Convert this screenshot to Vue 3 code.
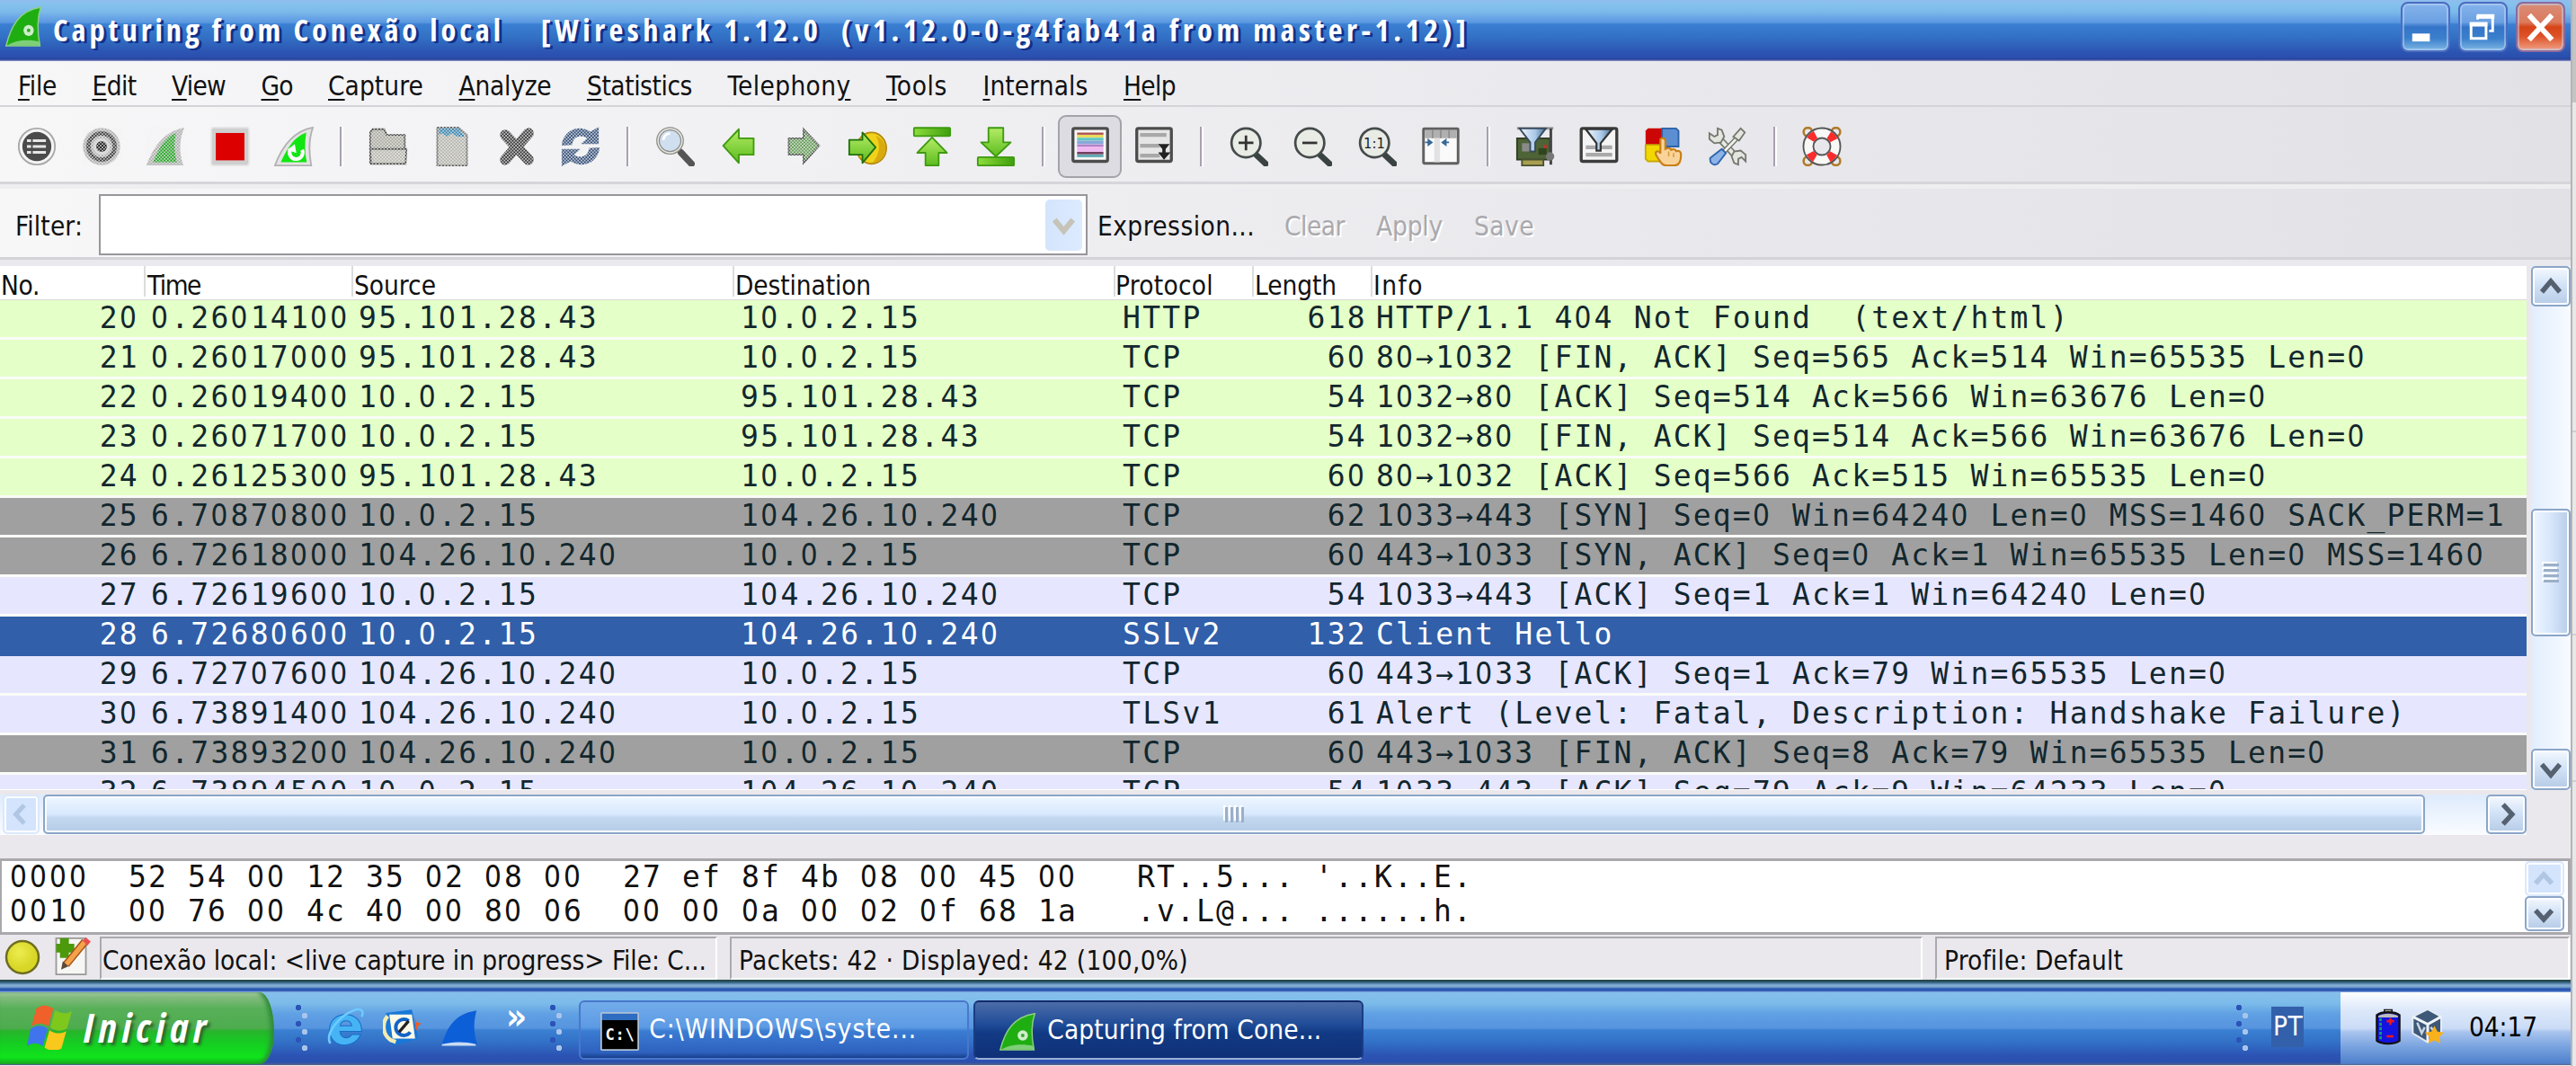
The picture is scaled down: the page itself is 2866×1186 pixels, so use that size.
<script setup>
import { h } from 'vue'

// Spreads letter-spacing so that a label fills the given width.
const vFit = {
  mounted(el, { value }) {
    const count = el.textContent.length
    el.style.letterSpacing = (value - el.getBoundingClientRect().width) / count + 'px'
  },
}

// Monospaced text with plain (undotted) zeros.
const Mono = ({ text }) =>
  h('span', { class: 'mono' }, text.split(/(0+)/).filter(Boolean).map((run) => (run[0] === '0' ? h('span', { class: 'zero' }, run) : run)))
Mono.props = ['text']

const menu = [
  ['', 'F', 'ile', 43], ['', 'E', 'dit', 49], ['', 'V', 'iew', 60], ['', 'G', 'o', 35], ['', 'C', 'apture', 106],
  ['', 'A', 'nalyze', 103], ['', 'S', 'tatistics', 117], ['Telephon', 'y', '', 137], ['', 'T', 'ools', 68], ['', 'I', 'nternals', 117], ['', 'H', 'elp', 58],
]

const fin = '<path d="M2 22C5 13 10 4 22 1c-3 7-3 13-1 21z"'
const lens = (inner) => `<path d="M15 15.5l7.5 7" stroke="#3a4242" stroke-width="3.6" stroke-linecap="round"/><circle cx="10.5" cy="9.8" r="8.8" fill="#e9ebe5" stroke="#444b4a" stroke-width="1.5"/>${inner}`
const dither = '<rect x="-1" y="-1" width="26" height="26" fill="url(#dither)"/>'

const icons = {
  interfaces: '<circle cx="12" cy="12" r="11" fill="#f5f5f5" stroke="#a8a8a8"/><circle cx="12" cy="12" r="8.8" fill="#4b4b4b"/><path d="M6 8.5h2.5M6 12h2.5M6 15.5h2.5M9.5 8.5h8M9.5 12h8M9.5 15.5h8" stroke="#e6e6e6" stroke-width="1.6"/>',
  options: '<circle cx="12" cy="12" r="11.3" fill="#aaa"/><circle cx="12" cy="12" r="8" fill="none" stroke="#333" stroke-width="2.6"/><circle cx="12" cy="12" r="5" fill="#ccc"/><circle cx="12" cy="12" r="3.3" fill="#111"/>' + dither,
  start: '<path d="M.5 23.500C4 14 10 3 23.500.5c-3 7-3.500 15-.5 23z" fill="#aaa"/><path d="M4.500 21.500C8 13 12 6 18.500 4c-1.500 6-1 12 .5 17.500z" fill="#1c9c1c"/>' + dither,
  stop: '<rect x=".5" y=".5" width="23" height="23" rx="1.500" fill="#cfcfcf" stroke="#e6e6e6"/><rect x="3.300" y="3.800" width="17.400" height="16.600" fill="#dc0000"/>',
  restart: '<path d="M.5 23.500C4 14 10 3 23.500.5c-2.500 7-2.500 15-1 23z" fill="#e4e4e4" stroke="#b2b2b2"/><path d="M4 21.500C8 13 12 6 19.500 3.500c-1 6-1 12 .3 18z" fill="#12e612"/><path d="M10 13.500a4 4 0 1 0 7 .5" fill="none" stroke="#fff" stroke-width="2.200"/><path d="M12.500 10.500l1 5.500-5.500-2z" fill="#fff"/>',
  open: '<path d="M1 22V3.500l1.500-2h7L11 5h11v17z" fill="#a5a59a" stroke="#333" /><path d="M1 13.500h22l-.5 9H1.500z" fill="#b5b5aa" stroke="#333"/>' + dither,
  file: '<path d="M3 .5h13l5 4.500v18.500H3z" fill="#b0b0a6" stroke="#555"/><path d="M4 1h12l4 5h-5l-3-2-3 2-3-2-2 1z" fill="#2a7ca8"/>' + dither,
  close: '<path d="M5 5l14 15M19 4L5 20" stroke="#333" stroke-width="6.500" stroke-linecap="round"/>' + dither,
  reload: '<path d="M.5 11.500C1 3 10-2 18 3l5-3v10.500H12l4-3.500c-5-3-9 0-9 4z" fill="#2e4a74"/><path d="M23.500 12.500C23 21 14 26 6 21l-5.500 3V13.500H12L8 17c5 3 9 0 9-4z" fill="#2e4a74"/>' + dither,
  find: '<path d="M15.500 15.500l6.500 7" stroke="#555" stroke-width="4" stroke-linecap="round"/><circle cx="9" cy="8.500" r="7.300" fill="#cfdff0" stroke="#8d8d88" stroke-width="2.200"/><circle cx="9" cy="8.500" r="7.300" fill="none" stroke="#e8e8e4" stroke-width=".8"/><path d="M5 8a4 4 0 0 1 4-4" stroke="#fff" stroke-width="1.500" fill="none"/>',
  back: '<path d="M2.500 11.500L12 1.500V7h9v10h-9v5z" fill="url(#green)" stroke="#3f9a10" stroke-linejoin="round"/>',
  forward: '<path d="M21.500 11.500L12 1.500V7H3v10h9v5z" fill="#5f9850" stroke="#333"/>' + dither,
  goto: '<ellipse cx="14.500" cy="13" rx="9" ry="9.500" fill="#f0d21a" stroke="#b58a10"/><path d="M17 5.500c3 4 3 11-2 16.500 10-1 11-13 2-16.500z" fill="#d8aa10"/><path d="M17 12.500L9 3.500V8H1v9h8v5z" fill="url(#green)" stroke="#20700c" stroke-linejoin="round"/>',
  first: '<rect x="1" y=".7" width="22" height="5" rx=".5" fill="url(#bar)" stroke="#3f9a10"/><path d="M12 6.500l9 9.300h-5V23.500H8v-7.700H3z" fill="url(#green)" stroke="#3f9a10" stroke-linejoin="round"/>',
  last: '<rect x="1" y="18.500" width="22" height="5" rx=".5" fill="url(#bar)" stroke="#3f9a10"/><path d="M12 18L3 9.500h4.500V.7h9v8.800H21z" fill="url(#green)" stroke="#3f9a10" stroke-linejoin="round"/>',
  colorize: '<rect x="1.500" y="1" width="21" height="20" rx="1" fill="#f8f8f8" stroke="#4c4c4c" stroke-width="1.800"/><path d="M4 4.200h16" stroke="#b05050" stroke-width="1.300"/><path d="M4 5.700h16" stroke="#e8d850" stroke-width="1.500"/><path d="M4 7.500h16" stroke="#60c8c0" stroke-width="1.700"/><path d="M4 9.500h16" stroke="#88a8d8" stroke-width="2.200"/><path d="M4 11.500h16" stroke="#b080c8" stroke-width="1.500"/><path d="M4 13.700h16" stroke="#f0b8f0" stroke-width="3"/><path d="M4 16h16" stroke="#704060" stroke-width="1.500"/><path d="M4 17.700h16" stroke="#58a8b0" stroke-width="1.500"/>',
  autoscroll: '<rect x="1.500" y="1" width="21" height="20" rx="1" fill="#e6e6e6" stroke="#4c4c4c" stroke-width="1.800"/><path d="M3.500 5h16M3.500 11.500h12M3.500 17.500h12" stroke="#a8a8a8" stroke-width="2.400"/><path d="M14.500 10.500h7l-2.500 3v2h3L18 20l-3.500-4.500h2.500v-2z" fill="#222"/>',
  zoomIn: lens('<path d="M6 9.800h9M10.500 5.300v9" stroke="#333" stroke-width="1.500"/>'),
  zoomOut: lens('<path d="M6 9.800h9" stroke="#333" stroke-width="1.500"/>'),
  zoomOne: lens('<text x="10.400" y="13" font-size="9" text-anchor="middle" font-family="DejaVu Sans Condensed, sans-serif" fill="#222">1:1</text>'),
  resize: '<rect x="1.500" y="1.200" width="21" height="21" rx=".5" fill="#fafafa" stroke="#606060" stroke-width="1.600"/><path d="M2.300 2h19.400v5H2.300z" fill="#b0b0b0"/><path d="M7 2v5M12 2v5M17 2v5" stroke="#888" stroke-width=".8"/><path d="M8 7h3.500v14.500H8z" fill="#e2e2e4"/><path d="M2.500 9.500h4M4.500 8l2 1.500-2 1.500zM17 9.500h-4M15 8l-2 1.500 2 1.500z" stroke="#356898" fill="#356898"/>',
  captureFilter: '<path d="M1 7h20v13H1z" fill="#4e6336" stroke="#2e3c22"/><path d="M4 20h13v3.500H4z" fill="#a8a050" stroke="#4a5030" /><path d="M1 1h22" stroke="#999" stroke-width="1.600"/><path d="M21.500 1v22" stroke="#444" stroke-width="1.600"/><circle cx="21" cy="18" r="2.600" fill="#777"/><path d="M4 10h6v5H4z" fill="#8a8a8a"/><path d="M14 13h5v4h-5z" fill="#314420"/><path d="M17 11h2v2h-2z" fill="#b33"/><path d="M2.500 1h16L12 9.500v5.500h-3V9.500z" fill="url(#funnel)" stroke="#394a5c"/>',
  displayFilter: '<rect x="1.200" y="1" width="21.600" height="20" rx="1" fill="#f4f4f4" stroke="#3c3c3c" stroke-width="1.800"/><path d="M4 12.500h16M4 17h16" stroke="#aaa" stroke-width="2.400"/><path d="M4 1.500h16l-7 8.500v4.500h-2.500V10z" fill="url(#funnel)" stroke="#333" stroke-width="1.200"/>',
  colors: '<path d="M1 11V2.500L2.500 1H11v10z" fill="#cc0505"/><path d="M11 1h8.500L21 2.500V12H11z" fill="#5b8fd2" stroke="#2d62a8"/><path d="M1 11h10v10H2.500L1 19.500z" fill="#f0d800" stroke="#c8aa00"/><path d="M10 7.500c1.500-1.500 3 0 3 1v5c2-1 3-.5 3.500.5 1.500-.8 2.700 0 3 .8 1.700-.5 3 .2 3 2.200 0 3-.5 6.500-4 6.500h-5c-3 0-3.500-2.500-5-4.500-1.500-2-2-3-1-3.800 1-.7 2 0 2.500 1z" fill="#f9d49a" stroke="#c98018" stroke-width="1.200"/><path d="M15 15v3M18 16v2.500" stroke="#d89838" stroke-width=".8"/>',
  tools: '<path d="M5 5l14 15" stroke="#74786f" stroke-width="4"/><path d="M5 5l14 15" stroke="#e9eae4" stroke-width="2.200"/><path d="M1 4v3.500L4 10l4-.5L10 6 8.500 2 6 1v4L4 6z" fill="#e4e5de" stroke="#74786f"/><path d="M23 21v-4l-3-2.500-4 .5-1.500 3 1.500 4 2.500 1v-3.500l2-1z" fill="#e4e5de" stroke="#74786f"/><path d="M19 5.500L10 15" stroke="#74786f" stroke-width="3"/><path d="M19 5.500L10 15" stroke="#f2f2ec" stroke-width="1.400"/><path d="M15.500 6L20 1l2.500 2.500-3.500 5z" fill="#e4e5de" stroke="#74786f"/><path d="M8.500 13.500l2.500 2.500-5 6.500c-2.500 1.500-5-.5-4.500-3.500z" fill="#8db4e8" stroke="#2f64ac"/>',
  help: '<g fill="none" stroke="#b07a28" stroke-width="1.400"><circle cx="3.500" cy="3.200" r="2.600"/><circle cx="20.500" cy="3.200" r="2.600"/><circle cx="3.500" cy="20.800" r="2.600"/><circle cx="20.500" cy="20.800" r="2.600"/></g><circle cx="12" cy="12" r="8.200" fill="none" stroke="#555" stroke-width="7"/><circle cx="12" cy="12" r="8.200" fill="none" stroke="#f8f8f6" stroke-width="5"/><circle cx="12" cy="12" r="8.200" fill="none" stroke="#fb2c2c" stroke-width="5" stroke-dasharray="4.400 8.480" stroke-dashoffset="-4.240"/>',
  finGreen: '<path d="M1 23.500C4 12 9 3 22.500 1c-2.500 7-2 15-.5 22.500z" fill="#1fae12" stroke="#8fcf86" stroke-width=".8"/><path d="M1.500 23.300c6-3.600 14-3.600 20.300-2.300l.4 2.300z" fill="#7fcf78"/><circle cx="15" cy="14.500" r="3.200" fill="#cfeecb"/><circle cx="15" cy="14.500" r="1.100" fill="#36a82c"/>',
  finBlue: '<path d="M1.500 22.500C5 11 10 3.500 23 1.500c-2 7-2 14 .5 21z" fill="#0d5fd8"/><path d="M1.500 22.500c6-1.500 14-2 21 0v1h-21z" fill="#c9dcf4"/>',
  flag: '<path d="M5 2c3.500-2.500 6-2 9 0l-2.600 9.500c-3-2-5.500-2-9 0z" fill="#f0602a"/><path d="M15 2.800c3 2 6 2.200 9 .5l-2.600 9.300c-3 1.700-6 1.500-9-.5z" fill="#7ec81e"/><path d="M2 12.700c3.500-2 6-2 9 0L8.500 22c-3-2-5.500-2-8.500 0z" fill="#3f74ee"/><path d="M12 13.500c3 2 6 2.200 9 .5l-2.600 9.300c-3 1.700-6 1.500-9-.5z" fill="#f8c81c"/>',
  ie: '<path d="M21.500 16.500c-2 4-5.500 6.500-10 6.500C5.500 23 2 18.800 2 13.500S6 4 12 4s10 4 10 10.500H8.500c.3 2.800 2 4 4 4 1.500 0 2.500-.7 3.300-2zM8.600 11h7.200c-.3-2-1.700-3-3.500-3-2 0-3.300 1-3.700 3z" fill="#46b4f4" fill-rule="evenodd" stroke="#1a6cc8" stroke-width=".6"/><path d="M2.500 22C-1 16 8 5 17 1.500c5-2 6.500.5 5 4" fill="none" stroke="#6ecbff" stroke-width="1.400"/>',
  outlook: '<path d="M2 3l16-2 4 18-14 4-6-3z" fill="#1878d8"/><path d="M4 4h14l2 15H6z" fill="#fdfbe8"/><path d="M16 8a5 5 0 1 0 1 7" fill="none" stroke="#1464c8" stroke-width="2.200"/><path d="M3 5a10 10 0 0 0 2 15l3 1" fill="none" stroke="#f6ebb0" stroke-width="2.400"/><path d="M10 15l6-7" stroke="#222" stroke-width="1.800"/><path d="M20 6l1 3 3 .500-2.500 2 .500 3-2-2z" fill="#f05a20"/>',
  console: '<rect y="0" width="24" height="24" rx="1" fill="#aebfd4"/><rect x="1" y="1" width="22" height="4" fill="#2d6cc0"/><rect x="1" y="5" width="22" height="18" fill="#000"/><text x="12" y="17.500" text-anchor="middle" font-size="9.500" font-weight="bold" textLength="18" font-family="DejaVu Sans Mono, monospace" fill="#fff">C:\\</text>',
  battery: '<path d="M7 3V1.500h5V3" fill="#ddd" stroke="#222"/><path d="M2 5c3-2.500 12-2.500 15 0v17c-3 2.500-12 2.500-15 0z" fill="#1414e0" stroke="#111" stroke-width="1.400"/><path d="M3 5.500c3-2 10-2 13 0v1H3z" fill="#bbb"/><path d="M4.500 7v14" stroke="#10a070" stroke-width="1.600" stroke-dasharray="2 1"/><path d="M8.500 9h5M11 7v4.500M8.500 19h4.500" stroke="#f01818" stroke-width="1.500"/>',
  vbox: '<path d="M2 6L12 1l9 5v11l-9 6-10-6z" fill="#3e5878" stroke="#e4eaf2" stroke-width="1.200"/><path d="M2 6l10 5 9-5M12 11v12" stroke="#f0f4f8" stroke-width="1.800" fill="none"/><path d="M5 10l3 7 2-4M14 13l4 5" stroke="#c8d4e4" stroke-width="1.500" fill="none"/><path d="M16.500 12l2 4 4.500.5-3.300 3 .8 4.300-4-2-4 2 .8-4.300-3.300-3 4.500-.5z" fill="#f8b01c"/>',
  note: '<path d="M3 1h18v22H3z" fill="#f6f6f4" stroke="#999" /><path d="M8 1v12M3 7h11" stroke="#4c9a0c" stroke-width="5.400"/><path d="M20.500 3L9 17" stroke="#a35414" stroke-width="4.600"/><path d="M20.500 3L9 17" stroke="#f6a24c" stroke-width="3"/><path d="M7 15l3.500 3L6 20z" fill="#5b4838"/><path d="M19 2.500L21 .5l3 2.500-2 2.500z" fill="#e85050"/>',
}

const toolbar = ['interfaces', 'options', 'start', 'stop', 'restart', '|', 'open', 'file', 'close', 'reload', '|', 'find', 'back', 'forward', 'goto', 'first', 'last', '|', 'colorize', 'autoscroll', '|', 'zoomIn', 'zoomOut', 'zoomOne', 'resize', '|', 'captureFilter', 'displayFilter', 'colors', 'tools', '|', 'help']

const columns = [
  ['No.', 43, 'c-no'], ['Time', 59, 'c-time'], ['Source', 91, 'c-src'], ['Destination', 151, 'c-dst'],
  ['Protocol', 109, 'c-proto'], ['Length', 91, 'c-len'], ['Info', 56, 'c-info'],
]

const A = '95.101.28.43'
const B = '104.26.10.240'
const ME = '10.0.2.15'
const packets = [
  ['20', '0.26014100', A, ME, 'HTTP', '618', 'HTTP/1.1 404 Not Found  (text/html)', 'http'],
  ['21', '0.26017000', A, ME, 'TCP', '60', '80→1032 [FIN, ACK] Seq=565 Ack=514 Win=65535 Len=0', 'http'],
  ['22', '0.26019400', ME, A, 'TCP', '54', '1032→80 [ACK] Seq=514 Ack=566 Win=63676 Len=0', 'http'],
  ['23', '0.26071700', ME, A, 'TCP', '54', '1032→80 [FIN, ACK] Seq=514 Ack=566 Win=63676 Len=0', 'http'],
  ['24', '0.26125300', A, ME, 'TCP', '60', '80→1032 [ACK] Seq=566 Ack=515 Win=65535 Len=0', 'http'],
  ['25', '6.70870800', ME, B, 'TCP', '62', '1033→443 [SYN] Seq=0 Win=64240 Len=0 MSS=1460 SACK_PERM=1', 'syn'],
  ['26', '6.72618000', B, ME, 'TCP', '60', '443→1033 [SYN, ACK] Seq=0 Ack=1 Win=65535 Len=0 MSS=1460', 'syn'],
  ['27', '6.72619600', ME, B, 'TCP', '54', '1033→443 [ACK] Seq=1 Ack=1 Win=64240 Len=0', 'tcp'],
  ['28', '6.72680600', ME, B, 'SSLv2', '132', 'Client Hello', 'selected'],
  ['29', '6.72707600', B, ME, 'TCP', '60', '443→1033 [ACK] Seq=1 Ack=79 Win=65535 Len=0', 'tcp'],
  ['30', '6.73891400', B, ME, 'TLSv1', '61', 'Alert (Level: Fatal, Description: Handshake Failure)', 'tcp'],
  ['31', '6.73893200', B, ME, 'TCP', '60', '443→1033 [FIN, ACK] Seq=8 Ack=79 Win=65535 Len=0', 'syn'],
  ['32', '6.73894500', ME, B, 'TCP', '54', '1033→443 [ACK] Seq=79 Ack=9 Win=64233 Len=0', 'tcp'],
]

const bytes = [
  "0000  52 54 00 12 35 02 08 00  27 ef 8f 4b 08 00 45 00   RT..5... '..K..E.",
  '0010  00 76 00 4c 40 00 80 06  00 00 0a 00 02 0f 68 1a   .v.L@... ......h.',
  '0020  0a f0 04 09 01 bb c2 a6  9d 02 00 03 e8 02 50 18   ........ ......P.',
]
</script>

<template>
  <div class="screen">
    <svg class="defs" width="0" height="0">
      <defs>
        <pattern id="dither" width="2" height="2" patternUnits="userSpaceOnUse">
          <path d="M0 0h1v1H0zM1 1h1v1H1z" fill="#f2f2f4" fill-opacity=".75" />
        </pattern>
        <linearGradient id="green" x2="0" y2="1"><stop stop-color="#b4ec66" /><stop offset="1" stop-color="#5cbc1e" /></linearGradient>
        <linearGradient id="bar"><stop stop-color="#8ede3c" /><stop offset="1" stop-color="#3f9e0c" /></linearGradient>
        <linearGradient id="funnel"><stop stop-color="#f2f7fc" /><stop offset=".6" stop-color="#a8c8e8" /><stop offset="1" stop-color="#4a6c94" /></linearGradient>
        <radialGradient id="lamp" cx=".4" cy=".35"><stop stop-color="#ecec50" /><stop offset="1" stop-color="#d8d626" /></radialGradient>
      </defs>
    </svg>

    <div class="desk">
      <header class="title">
        <svg class="title-icon" viewBox="0 0 24 24" preserveAspectRatio="none" v-html="icons.finGreen" />
        <span v-fit="502" class="title-text">Capturing from Conexão local</span>
        <span v-fit="1033" class="title-text second">[Wireshark 1.12.0&nbsp; (v1.12.0-0-g4fab41a from master-1.12)]</span>
        <div class="winbtns">
          <span class="winbtn"><svg viewBox="0 0 52 54"><path d="M11 34h20v9H11z" fill="#fff" /></svg></span>
          <span class="winbtn"><svg viewBox="0 0 52 54"><path d="M33 31h4V15H20v3" fill="none" stroke="#fff" stroke-width="3" /><path d="M19 12h20v5H19zM11 21h20v5H11z" fill="#fff" /><path d="M12.500 23h17v16.500h-17z" fill="none" stroke="#fff" stroke-width="3" /></svg></span>
          <span class="winbtn close"><svg viewBox="0 0 52 54"><path d="M13 13l26 28M39 13L13 41" stroke="#fff" stroke-width="6" /></svg></span>
        </div>
      </header>

      <nav class="menu">
        <span v-for="m in menu" :key="m[1] + m[2]" v-fit="m[3]">{{ m[0] }}<u>{{ m[1] }}</u>{{ m[2] }}</span>
      </nav>

      <div class="toolbar">
        <template v-for="(t, i) in toolbar" :key="i">
          <i v-if="t === '|'" class="sep" />
          <span v-else class="tool" :class="{ pressed: t === 'colorize' }"><svg viewBox="0 0 24 24" v-html="icons[t]" /></span>
        </template>
      </div>

      <div class="filter">
        <span v-fit="75" class="flabel">Filter:</span>
        <div class="combo"><span class="drop"><svg viewBox="0 0 40 56"><path d="M10 22l10 12 10-12" fill="none" stroke="#c6c3b8" stroke-width="6" /></svg></span></div>
        <span v-fit="175" class="expr">Expression...</span>
        <span v-fit="67" class="off">Clear</span>
        <span v-fit="74" class="off">Apply</span>
        <span v-fit="67" class="off">Save</span>
      </div>

      <section class="list">
        <div class="grid">
          <div class="head">
            <span v-for="c in columns" :key="c[0]" :class="c[2]"><b v-fit="c[1]">{{ c[0] }}</b></span>
          </div>
          <div class="rows">
            <div v-for="p in packets" :key="p[0]" class="row" :class="p[7]">
              <Mono class="c-no" :text="p[0]" />
              <Mono class="c-time" :text="p[1]" />
              <Mono class="c-src" :text="p[2]" />
              <Mono class="c-dst" :text="p[3]" />
              <Mono class="c-proto" :text="p[4]" />
              <Mono class="c-len" :text="p[5]" />
              <Mono class="c-info" :text="p[6]" />
            </div>
          </div>
        </div>
        <div class="vbar">
          <span class="sb up"><svg viewBox="0 0 44 44"><path d="M11 29l11-13 11 13" /></svg></span>
          <span class="vthumb"><i /><i /><i /><i /></span>
          <span class="sb down"><svg viewBox="0 0 44 44"><path d="M11 16l11 13 11-13" /></svg></span>
        </div>
      </section>

      <div class="hbar">
        <span class="sb left dim"><svg viewBox="0 0 44 44"><path d="M26 10L15 22l11 12" /></svg></span>
        <span class="hthumb"><i /><i /><i /><i /></span>
        <span class="sb right"><svg viewBox="0 0 44 44"><path d="M18 10l11 12-11 12" /></svg></span>
      </div>

      <section class="hex">
        <div class="hexlines"><div v-for="b in bytes" :key="b"><Mono :text="b" /></div></div>
        <div class="hexbar">
          <span class="sb dim"><svg viewBox="0 0 44 38"><path d="M11 25l10-11 10 11" /></svg></span>
          <span class="sb"><svg viewBox="0 0 44 38"><path d="M11 15l10 11 10-11" /></svg></span>
        </div>
      </section>

      <footer class="status">
        <svg class="lamp" viewBox="0 0 40 40"><circle cx="20" cy="20" r="18" fill="url(#lamp)" stroke="#6e6d20" stroke-width="2.500" /></svg>
        <svg class="note" viewBox="0 0 24 24" v-html="icons.note" />
        <div class="pane p1"><span v-fit="672">Conexão local: &lt;live capture in progress&gt; File: C...</span></div>
        <div class="pane p2"><span v-fit="500">Packets: 42 · Displayed: 42 (100,0%)</span></div>
        <div class="pane p3"><span v-fit="199">Profile: Default</span></div>
      </footer>

      <div class="edge" />

      <div class="taskbar">
        <div class="start"><svg viewBox="0 0 24 24" preserveAspectRatio="none" v-html="icons.flag" /><span v-fit="142">Iniciar</span></div>
        <i class="grip g1" />
        <div class="quick">
          <svg viewBox="0 0 24 24" v-html="icons.ie" />
          <svg viewBox="0 0 24 24" v-html="icons.outlook" />
          <svg viewBox="0 0 24 24" v-html="icons.finBlue" />
          <span class="more">»</span>
        </div>
        <i class="grip g2" />
        <div class="task"><svg viewBox="0 0 24 24" v-html="icons.console" /><span v-fit="298">C:\WINDOWS\syste...</span></div>
        <div class="task active"><svg viewBox="0 0 24 24" v-html="icons.finGreen" /><span v-fit="305">Capturing from Cone...</span></div>
        <i class="grip g3" />
        <span class="lang"><span v-fit="33">PT</span></span>
        <div class="tray">
          <svg class="bat" viewBox="0 0 19 25" v-html="icons.battery" />
          <svg class="vb" viewBox="0 0 24 25" v-html="icons.vbox" />
          <span v-fit="76">04:17</span>
        </div>
      </div>
    </div>
    <aside class="behind"><i class="b1" /><i class="b2" /><i class="b3" /><i class="b4" /></aside>
  </div>
</template>

<style>
body {
  margin: 0;
  overflow: hidden;
}
.mono {
  font-family: 'DejaVu Sans Mono', 'Liberation Mono', monospace;
  font-size: 33px;
  letter-spacing: 2.26px;
  white-space: pre;
}
.mono .zero {
  font-family: 'DejaVu Sans Condensed', 'DejaVu Sans', sans-serif;
  font-stretch: condensed;
  letter-spacing: 3.24px;
}
.mono.c-src,
.mono.c-dst {
  letter-spacing: 2.4px;
}
.mono.c-info {
  letter-spacing: 2.18px;
}
.mono.c-info .zero {
  letter-spacing: 3.16px;
}
</style>

<style scoped>
.screen {
  display: flex;
  width: 2866px;
  height: 1186px;
  overflow: hidden;
  font-family: 'DejaVu Sans Condensed', 'DejaVu Sans', sans-serif;
  font-stretch: condensed;
  font-size: 29.5px;
  color: #111;
  white-space: nowrap;
}
.screen * {
  box-sizing: border-box;
}
.defs {
  position: absolute;
}
.desk {
  width: 2860px;
  height: 1186px;
  display: flex;
  flex-direction: column;
  background: #eae8ec;
}
svg {
  display: block;
  flex: none;
}
.title {
  height: 68px;
  flex: none;
  display: flex;
  background: linear-gradient(#90bdee 0, #84c2ec 5px, #7ab8ea 14px, #68a4e6 20px, #5a98e0 25px, #3a7fd2 27px, #3270c4 42px, #2c54b2 58px, #2a4fae 64px, #28409a 66px, #98a0cc 68px);
}
.title-icon {
  width: 43px;
  height: 46px;
  margin: 6px 0 0 5px;
}
.title-text {
  align-self: flex-start;
  margin-left: 11px;
  font-family: 'Open Sans', 'Noto Sans', sans-serif;
  font-size: 34.5px;
  font-weight: 700;
  line-height: 65px;
  color: #fff;
  text-shadow: 3px 2px 0 #123088;
}
.second {
  margin-left: 41px;
}
.winbtns {
  display: flex;
  gap: 9px;
  margin: 2px 6px 0 auto;
}
.winbtn {
  width: 55px;
  height: 56px;
  border: 2px solid #4c6cc0;
  border-radius: 8px;
  background: linear-gradient(#86b4ec, #6ba0e2 40%, #3474c8 50%, #3b80cc 75%, #7fb6e4);
  box-shadow: inset 0 0 0 2px rgba(190, 218, 248, 0.5);
}
.winbtn.close {
  border-color: #8a6aa0;
  background: linear-gradient(#d98c78, #dc7a5c 40%, #d64418 50%, #de5228 70%, #f0a086);
}
.menu {
  height: 51px;
  flex: none;
  display: flex;
  gap: 39.5px;
  padding: 2px 0 0 20px;
  line-height: 52px;
  border-bottom: 2px solid #d4d3d8;
  background: linear-gradient(90deg, #f7f7f8, #f0f0f3 33%, #e8e7eb 70%, #e2e1e6);
}
u {
  text-decoration: underline;
  text-decoration-thickness: 2px;
  text-underline-offset: 4px;
}
.toolbar {
  height: 86px;
  flex: none;
  display: flex;
  padding: 4px 0 0 5.25px;
  align-items: center;
  border-bottom: 3px solid #d6d5da;
  background: linear-gradient(90deg, #f7f7f8, #f0f0f3 33%, #e8e7eb 70%, #e2e1e6);
}
.tool {
  width: 71.5px;
  height: 70px;
  display: flex;
  align-items: center;
  justify-content: center;
}
.tool svg {
  width: 44px;
  height: 44px;
}
.pressed {
  border: 2px solid #a4a3aa;
  border-radius: 9px;
  background: #dddce2;
}
.sep {
  width: 2px;
  height: 44px;
  margin: 0 16px 0 15px;
  background: #a8a0b0;
  box-shadow: 2px 0 #fff;
}
.filter {
  height: 91px;
  flex: none;
  display: flex;
  align-items: flex-start;
  line-height: 84px;
  border-top: 5px solid #eeedf0;
  border-bottom: 7px solid #eae9ee;
  background: linear-gradient(transparent 76px, #d4d3d8 76px), linear-gradient(90deg, #f7f7f8, #f0f0f3 33%, #e8e7eb 70%, #e2e1e6);
}
.flabel {
  margin-left: 17px;
}
.combo {
  width: 1100px;
  height: 68px;
  margin: 6px 11px 0 18px;
  padding: 4px;
  display: flex;
  justify-content: flex-end;
  border: 2px solid #96969b;
  background: #fff;
}
.drop {
  width: 41px;
  height: 57px;
  border-radius: 5px;
  background: linear-gradient(90deg, #d4e4fc, #dcebff);
}
.off {
  color: #aaa9ad;
  text-shadow: 2px 2px #fff;
  margin-left: 35px;
}
.expr + .off {
  margin-left: 33px;
}
.list {
  height: 583px;
  flex: none;
  display: flex;
}
.grid {
  width: 2811px;
  background: #fff;
  display: flex;
  flex-direction: column;
}
.head {
  height: 39px;
  flex: none;
  display: flex;
  line-height: 45px;
  border-bottom: 2px solid #dadada;
}
.head b {
  display: inline-block;
  font-weight: 400;
}
.head span {
  height: 34px;
  flex: none;
  padding-left: 4px;
  box-shadow: inset 2px 0 #dcdcdc;
}
.head .c-no {
  width: 160px;
  padding-left: 1px;
  box-shadow: none;
}
.head .c-time {
  width: 231px;
}
.head .c-src {
  width: 424px;
  padding-left: 3px;
}
.head .c-dst {
  width: 424px;
  padding-left: 3px;
}
.head .c-proto {
  width: 154px;
  padding-left: 2px;
}
.head .c-len {
  width: 132px;
  padding-left: 3px;
}
.head .c-info {
  padding-left: 3px;
}
.rows {
  height: 544px;
  overflow: hidden;
  margin-top: -1px;
}
.row {
  height: 44px;
  display: flex;
  line-height: 39px;
  color: #12272e;
  border-bottom: 3px solid #fafcf8;
}
.row .mono {
  flex: none;
}
.row .c-no {
  width: 155px;
  text-align: right;
}
.row .c-time {
  width: 229px;
  padding-left: 13px;
}
.row .c-src {
  width: 424px;
  padding-left: 15px;
}
.row .c-dst {
  width: 424px;
  padding-left: 16px;
}
.row .c-proto {
  width: 154px;
  padding-left: 17px;
}
.row .c-len {
  width: 135px;
  text-align: right;
}
.row .c-info {
  padding-left: 10px;
}
.http {
  background: #e4ffc7;
}
.syn {
  background: #a0a0a0;
}
.tcp {
  background: #e7e6ff;
}
.row.selected {
  background: #315fa9;
  color: #fff;
  border-color: #315fa9;
}
.vbar {
  width: 44px;
  margin-left: 5px;
  display: flex;
  flex-direction: column;
  background: linear-gradient(90deg, #e2edfd, #f8fbff);
}
.sb {
  flex: none;
  border: 2px solid #8ba6c8;
  border-radius: 5px;
  background: linear-gradient(#f4f8fe, #d3e3f7 45%, #b6cbe6);
  box-shadow: inset 0 0 0 2px #fbfdff;
}
.sb svg {
  width: 100%;
  height: 100%;
}
.sb path {
  fill: none;
  stroke: #56616f;
  stroke-width: 6;
}
.dim {
  border-color: #dce8fa;
  background: #d3e4fc;
}
.dim path {
  stroke: #b0c6e2;
}
.up {
  height: 45px;
}
.vthumb {
  height: 142px;
  margin-top: 225px;
  border: 2px solid #8ba6c8;
  border-radius: 5px;
  background: linear-gradient(90deg, #eef5ff, #dae8fc 45%, #b8cde8);
  box-shadow: inset 0 0 0 2px #fbfdff;
  display: flex;
  flex-direction: column;
  align-items: center;
  justify-content: center;
  gap: 3px;
}
.vthumb i {
  width: 17px;
  height: 3px;
  background: #9cafc8;
  box-shadow: -2px -2px #fff;
}
.down {
  height: 46px;
  margin-top: auto;
}
.hbar {
  height: 45px;
  width: 2811px;
  flex: none;
  display: flex;
  margin-top: 5px;
  background: linear-gradient(#deebfc, #fafcff);
}
.left,
.right {
  height: 44px;
}
.left {
  width: 41px;
  margin-left: 3px;
}
.right {
  width: 45px;
  margin-left: auto;
}
.hthumb {
  width: 2650px;
  height: 44px;
  margin-left: 4px;
  border: 2px solid #8ba6c8;
  border-radius: 5px;
  background: linear-gradient(#eef6ff, #d8e8fd 50%, #c2d8f0 60%, #b6cce6);
  box-shadow: inset 0 0 0 2px #fbfdff;
  display: flex;
  align-items: center;
  justify-content: center;
  gap: 3px;
}
.hthumb i {
  width: 3px;
  height: 17px;
  background: #9cafc8;
  box-shadow: -2px -2px #fff;
}
.hex {
  height: 85px;
  flex: none;
  margin-top: 26px;
  display: flex;
  border: 3px solid #a9a8ad;
  border-left-width: 2px;
  background: #fff;
}
.hexlines {
  flex: 1;
  height: 77px;
  overflow: hidden;
  padding-left: 9px;
  line-height: 35.7px;
}
.hexlines .mono {
  letter-spacing: 2.13px;
}
.hexlines :deep(.zero) {
  letter-spacing: 3.11px;
}
.hexbar {
  width: 44px;
  margin-right: 4px;
}
.hexbar .sb {
  display: block;
  height: 39px;
}
.status {
  height: 50px;
  flex: none;
  display: flex;
  line-height: 50px;
}
.lamp {
  width: 40px;
  height: 40px;
  margin: 5px 0 0 5px;
}
.note {
  width: 44px;
  height: 44px;
  margin: 2px 0 0 12px;
}
.pane {
  height: 48px;
  margin-top: 2px;
  border: 2px solid #aaa9ae;
  border-right-color: #fff;
  border-bottom-color: #fff;
}
.p1 {
  width: 687px;
  margin-left: 10px;
  padding-left: 1px;
}
.p2 {
  width: 1327px;
  margin-left: 14px;
  padding-left: 8px;
}
.p3 {
  width: 706px;
  margin-left: 14px;
  padding-left: 8px;
}
.edge {
  height: 14px;
  flex: none;
  background: linear-gradient(#1f4548 0, #2a4e58 2px, #4c7ca8 4px, #86afd4 6px, #7ba6cc 8px, #2b5cb4 10px, #2a50ae 12px, #88b8ea 14px);
}
.taskbar {
  height: 81px;
  flex: none;
  display: flex;
  color: #fff;
  background: linear-gradient(#86bfec 0, #7cbcea 12px, #60a0e4 24px, #5694de 40px, #3a80d2 42px, #3270c6 56px, #2c54b4 70px, #2b50ae 78px, #5c6484 81px);
}
.start {
  width: 305px;
  height: 80px;
  display: flex;
  border-radius: 0 18px 18px 0 / 0 50px 40px 0;
  background: linear-gradient(#c8dcc0 0, #84bc80 5px, #58b058 18px, #4eac4e 40px, #28b42c 43px, #16cc22 56px, #10e41c 72px, #10b41c 80px);
  box-shadow: inset -4px 0 5px #2e8a38;
}
.start svg {
  width: 50px;
  height: 50px;
  margin: 14px 0 0 30px;
}
.start span {
  align-self: flex-start;
  margin-left: 13px;
  font-family: 'Open Sans', 'Noto Sans', sans-serif;
  font-weight: 700;
  font-style: italic;
  font-size: 45px;
  line-height: 77px;
  text-shadow: 3px 3px 3px #2a6a30;
}
.grip {
  width: 14px;
  height: 58px;
  margin-top: 13px;
  background: radial-gradient(circle at 4px 4px, #2b54b8 3px, transparent 3.500px) 0 0 / 14px 18px, radial-gradient(circle at 11px 13px, #a9c4ec 3px, transparent 3.500px) 0 0 / 14px 18px;
}
.g1 {
  margin-left: 23px;
}
.quick {
  display: flex;
  margin: 17px 0 0 21px;
  gap: 20px;
}
.quick svg {
  width: 43px;
  height: 44px;
}
.more {
  font-size: 40px;
  font-weight: 700;
  line-height: 20px;
  margin-left: 11px;
}
.g2 {
  margin-left: 25px;
}
.task {
  width: 434px;
  height: 66px;
  margin: 9px 0 0 19px;
  display: flex;
  border: 2px solid #4878cc;
  border-radius: 6px;
  background: linear-gradient(#72acea, #5c9ae4 45%, #3a7cd2 52%, #2f62c0 90%, #17408c);
  line-height: 61px;
}
.task svg {
  width: 43px;
  height: 43px;
  margin: 11px 11px 0 22px;
}
.task.active {
  margin-left: 5px;
  border-color: #13296a #1a3c84 #9cb0d8;
  background: linear-gradient(#4c6ca8, #1f4c98 40%, #123a84 55%, #0f3078);
  line-height: 63px;
}
.task.active svg {
  margin-left: 26px;
}
.g3 {
  margin-left: auto;
}
.lang {
  width: 36px;
  height: 45px;
  margin: 16px 41px 0 26px;
  padding-left: 2px;
  line-height: 45px;
  background: #3260aa;
}
.tray {
  width: 256px;
  display: flex;
  color: #000;
  background: linear-gradient(#fdfeff 0, #dce8fa 20px, #cbdcf6 40px, #a9c4ee 44px, #7ba4e0 60px, #4e80cc 79px, #5c6484 81px);
}
.tray span {
  margin-left: 26px;
  line-height: 79px;
  align-self: flex-start;
}
.bat {
  width: 32px;
  height: 42px;
  margin: 17px 0 0 37px;
}
.vb {
  width: 40px;
  height: 42px;
  margin: 17px 0 0 8px;
}
.behind {
  width: 6px;
  background: #e8e8e8;
  border-left: 2px solid #b4b4b6;
  display: flex;
  flex-direction: column;
}
.b1 {
  height: 114px;
  background: #c4c4c4;
}
.b2,
.b3,
.b4 {
  height: 367px;
  border-bottom: 2px solid #d0d0d0;
}
.b3 {
  height: 226px;
}
.b4 {
  height: 163px;
}
</style>
